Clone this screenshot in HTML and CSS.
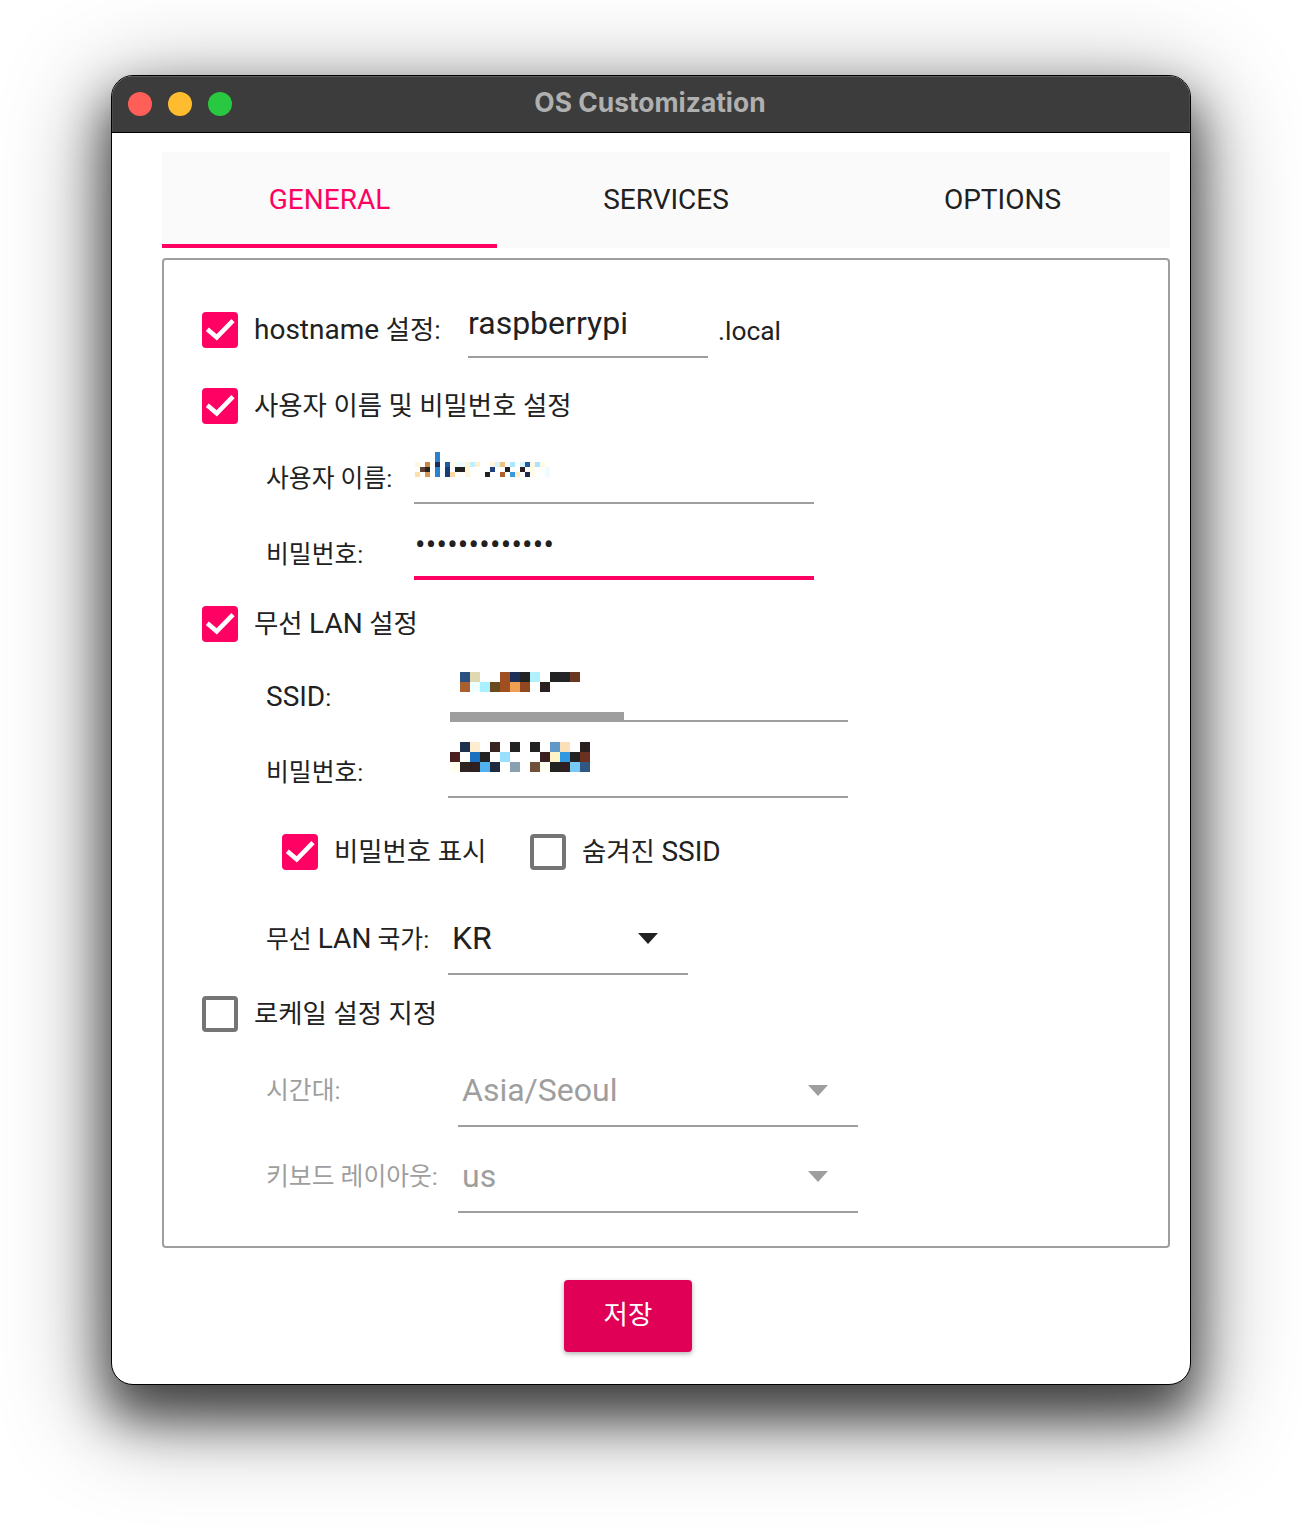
FILE: index.html
```html
<!DOCTYPE html>
<html lang="ko">
<head>
<meta charset="utf-8">
<title>OS Customization</title>
<link rel="stylesheet" href="styles.css">
</head>
<body>
<main class="window">
  <header class="titlebar">
    <div class="lights"><span class="light red"></span><span class="light yellow"></span><span class="light green"></span></div>
    <h1 class="title">OS Customization</h1>
  </header>
  <div class="content">
    <nav class="tabs">
      <div class="tab active">GENERAL</div>
      <div class="tab">SERVICES</div>
      <div class="tab">OPTIONS</div>
    </nav>
    <section class="frame">
      <div class="row row-host">
        <span class="box checked"><svg viewBox="0 0 36 36"><path d="M5.3 17.3 14.7 25.3 31 8.7"/></svg></span>
        <span class="label label-host"><span class="latin">hostname</span> 설정:</span>
        <div class="field field-host"><span class="value">raspberrypi</span></div>
        <span class="label suffix">.local</span>
      </div>
      <div class="row row-check gap-30">
        <span class="box checked"><svg viewBox="0 0 36 36"><path d="M5.3 17.3 14.7 25.3 31 8.7"/></svg></span>
        <span class="label">사용자 이름 및 비밀번호 설정</span>
      </div>
      <div class="row sub gap-24">
        <span class="label w-148">사용자 이름:</span>
        <div class="field field-400">
          <svg class="mosaic m-user" viewBox="0 0 135 25" width="135" height="25" shape-rendering="crispEdges">
            <rect x="20" y="0" width="5" height="10" fill="#2a82cc"/>
            <rect x="0" y="10" width="5" height="5" fill="#fff8e0"/><rect x="10" y="10" width="5" height="5" fill="#c98540"/><rect x="20" y="10" width="5" height="5" fill="#1e2a50"/><rect x="30" y="10" width="5" height="5" fill="#1f5aa0"/><rect x="35" y="10" width="5" height="5" fill="#fffbe8"/><rect x="40" y="10" width="10" height="5" fill="#eefcff"/><rect x="50" y="10" width="5" height="5" fill="#fff6d8"/><rect x="55" y="10" width="5" height="5" fill="#c2efff"/><rect x="60" y="10" width="5" height="5" fill="#fff0d0"/><rect x="75" y="10" width="5" height="5" fill="#fff5dc"/><rect x="80" y="10" width="5" height="5" fill="#d5f5ff"/><rect x="85" y="10" width="5" height="5" fill="#f0c080"/><rect x="95" y="10" width="5" height="5" fill="#a8e8ff"/><rect x="105" y="10" width="5" height="5" fill="#d5f5ff"/><rect x="110" y="10" width="5" height="5" fill="#1e5aa0"/><rect x="115" y="10" width="5" height="5" fill="#fff8e0"/><rect x="120" y="10" width="5" height="5" fill="#a8e4ff"/><rect x="125" y="10" width="5" height="5" fill="#fffbe0"/>
            <rect x="5" y="15" width="5" height="5" fill="#5f4030"/><rect x="10" y="15" width="5" height="5" fill="#222"/><rect x="20" y="15" width="5" height="5" fill="#2a82cc"/><rect x="30" y="15" width="5" height="5" fill="#1a3a78"/><rect x="40" y="15" width="10" height="5" fill="#222"/><rect x="50" y="15" width="5" height="5" fill="#fff6d8"/><rect x="75" y="15" width="5" height="5" fill="#1e4080"/><rect x="90" y="15" width="5" height="5" fill="#222"/><rect x="105" y="15" width="5" height="5" fill="#2a2020"/><rect x="115" y="15" width="5" height="5" fill="#fffbe8"/><rect x="130" y="15" width="5" height="5" fill="#eefcff"/>
            <rect x="0" y="20" width="5" height="5" fill="#ffe0a8"/><rect x="10" y="20" width="5" height="5" fill="#d89850"/><rect x="20" y="20" width="5" height="5" fill="#2a82cc"/><rect x="30" y="20" width="5" height="5" fill="#1a3a78"/><rect x="35" y="20" width="5" height="5" fill="#ffd9a0"/><rect x="50" y="20" width="5" height="5" fill="#fff6d8"/><rect x="70" y="20" width="5" height="5" fill="#222"/><rect x="85" y="20" width="5" height="5" fill="#b06030"/><rect x="95" y="20" width="5" height="5" fill="#3a98e0"/><rect x="100" y="20" width="5" height="5" fill="#fff0c8"/><rect x="110" y="20" width="5" height="5" fill="#1e2a50"/><rect x="115" y="20" width="5" height="5" fill="#fffbe8"/><rect x="130" y="20" width="5" height="5" fill="#eefcff"/>
          </svg>
        </div>
      </div>
      <div class="row sub gap-20">
        <span class="label w-148">비밀번호:</span>
        <div class="field field-400 focused"><span class="value dots">•••••••••••••</span></div>
      </div>
      <div class="row row-check gap-26">
        <span class="box checked"><svg viewBox="0 0 36 36"><path d="M5.3 17.3 14.7 25.3 31 8.7"/></svg></span>
        <span class="label">무선 <span class="latin">LAN</span> 설정</span>
      </div>
      <div class="row sub gap-24">
        <span class="label w-184"><span class="latin">SSID</span>:</span>
        <div class="field field-ssid">
          <svg class="mosaic m-ssid" viewBox="0 0 120 20" width="120" height="20" shape-rendering="crispEdges">
            <rect x="0" y="0" width="10" height="10" fill="#2a5080"/><rect x="10" y="0" width="10" height="10" fill="#e0d8b0"/><rect x="40" y="0" width="10" height="10" fill="#a05020"/><rect x="50" y="0" width="10" height="10" fill="#1e3058"/><rect x="60" y="0" width="10" height="10" fill="#222"/><rect x="70" y="0" width="10" height="10" fill="#b0f0ff"/><rect x="90" y="0" width="10" height="10" fill="#222"/><rect x="100" y="0" width="10" height="10" fill="#222428"/><rect x="110" y="0" width="10" height="10" fill="#6a3820"/>
            <rect x="0" y="10" width="10" height="10" fill="#a86030"/><rect x="10" y="10" width="10" height="10" fill="#eeffff"/><rect x="20" y="10" width="10" height="10" fill="#a8f0ff"/><rect x="30" y="10" width="10" height="10" fill="#6a4a20"/><rect x="40" y="10" width="10" height="10" fill="#a05020"/><rect x="50" y="10" width="10" height="10" fill="#f0a050"/><rect x="60" y="10" width="10" height="10" fill="#904820"/><rect x="80" y="10" width="10" height="10" fill="#2a2020"/>
          </svg>
          <span class="selection"></span>
        </div>
      </div>
      <div class="row sub gap-20">
        <span class="label w-182">비밀번호:</span>
        <div class="field field-400">
          <svg class="mosaic m-wifi" viewBox="0 0 140 30" width="140" height="30" shape-rendering="crispEdges">
            <rect x="10" y="0" width="10" height="10" fill="#1e3050"/><rect x="20" y="0" width="10" height="10" fill="#feecd0"/><rect x="40" y="0" width="10" height="10" fill="#3a2420"/><rect x="60" y="0" width="10" height="10" fill="#222"/><rect x="80" y="0" width="10" height="10" fill="#222"/><rect x="100" y="0" width="10" height="10" fill="#6098c8"/><rect x="110" y="0" width="10" height="10" fill="#fadfb8"/><rect x="130" y="0" width="10" height="10" fill="#2a2020"/>
            <rect x="0" y="10" width="10" height="10" fill="#4a2020"/><rect x="20" y="10" width="10" height="10" fill="#1a70c0"/><rect x="30" y="10" width="10" height="10" fill="#222"/><rect x="50" y="10" width="10" height="10" fill="#98e0ff"/><rect x="90" y="10" width="10" height="10" fill="#3a2020"/><rect x="100" y="10" width="10" height="10" fill="#fff4c8"/><rect x="110" y="10" width="10" height="10" fill="#3098e0"/><rect x="120" y="10" width="10" height="10" fill="#222"/><rect x="130" y="10" width="10" height="10" fill="#6a3020"/>
            <rect x="0" y="20" width="10" height="10" fill="#fffff0"/><rect x="10" y="20" width="10" height="10" fill="#2e2420"/><rect x="20" y="20" width="10" height="10" fill="#2e2020"/><rect x="30" y="20" width="10" height="10" fill="#50b0f0"/><rect x="40" y="20" width="10" height="10" fill="#1e2a40"/><rect x="60" y="20" width="10" height="10" fill="#88a0b0"/><rect x="80" y="20" width="10" height="10" fill="#705038"/><rect x="90" y="20" width="10" height="10" fill="#fffff0"/><rect x="100" y="20" width="10" height="10" fill="#222"/><rect x="110" y="20" width="10" height="10" fill="#2e2020"/><rect x="120" y="20" width="10" height="10" fill="#78c8f8"/><rect x="130" y="20" width="10" height="10" fill="#305880"/>
          </svg>
        </div>
      </div>
      <div class="row row-check row-options gap-36">
        <div class="option">
          <span class="box checked"><svg viewBox="0 0 36 36"><path d="M5.3 17.3 14.7 25.3 31 8.7"/></svg></span>
          <span class="label">비밀번호 표시</span>
        </div>
        <div class="option">
          <span class="box"></span>
          <span class="label">숨겨진 <span class="latin">SSID</span></span>
        </div>
      </div>
      <div class="row sub gap-49">
        <span class="label w-182 up">무선 <span class="latin">LAN</span> 국가:</span>
        <div class="field combo combo-country">
          <span class="value">KR</span>
          <svg class="caret" viewBox="0 0 20 12"><path d="M0 0H20L10 11Z"/></svg>
        </div>
      </div>
      <div class="row row-check gap-21">
        <span class="box"></span>
        <span class="label">로케일 설정 지정</span>
      </div>
      <div class="row sub disabled gap-39">
        <span class="label w-192 up">시간대:</span>
        <div class="field field-400 combo">
          <span class="value">Asia/Seoul</span>
          <svg class="caret" viewBox="0 0 20 12"><path d="M0 0H20L10 11Z"/></svg>
        </div>
      </div>
      <div class="row sub disabled gap-30">
        <span class="label w-192 up">키보드 레이아웃:</span>
        <div class="field field-400 combo">
          <span class="value">us</span>
          <svg class="caret" viewBox="0 0 20 12"><path d="M0 0H20L10 11Z"/></svg>
        </div>
      </div>
    </section>
    <div class="actions"><button class="save" type="button">저장</button></div>
  </div>
</main>
</body>
</html>
```

FILE: styles.css
```css
* { box-sizing: border-box; }
html, body { margin: 0; padding: 0; background: #fff; }
body {
  padding: 75px 111px 147px;
  font-family: Roboto, "Noto Sans CJK KR", sans-serif;
  color: #212121;
}
.window {
  width: 1080px;
  height: 1310px;
  border: 1px solid #000;
  border-radius: 22px;
  background: #fff;
  overflow: hidden;
  box-shadow: 0 28px 50px 4px rgba(0, 0, 0, .62), 0 24px 100px 8px rgba(0, 0, 0, .42);
}
.titlebar {
  height: 57px;
  background: #3b3c3b;
  border-bottom: 1px solid #000;
  box-shadow: inset 0 1px 0 #5c5c5c, inset 1px 0 0 #4c4c4c, inset -1px 0 0 #4c4c4c;
  display: flex;
  align-items: center;
  position: relative;
}
.lights { display: flex; gap: 16px; padding-left: 16px; }
.light { width: 24px; height: 24px; border-radius: 50%; }
.red { background: #ff5f57; }
.yellow { background: #febc2e; }
.green { background: #28c840; }
.title {
  margin: 0 0 4px;
  position: absolute;
  left: 0;
  right: 2px;
  text-align: center;
  font: 700 26.4px/1 Inter, sans-serif;
  color: #b0b0b0;
}
.content { padding: 19px 20px 0 50px; }
.tabs {
  display: grid;
  grid-template-columns: 335px 338px 335px;
  height: 96px;
  background: #fafafa;
}
.tab {
  display: flex;
  align-items: center;
  justify-content: center;
  font-size: 28px;
  padding-bottom: 2px;
}
.tab.active { color: #ff0063; border-bottom: 4px solid #ff0063; padding: 2px 0 0; }
.frame {
  margin-top: 10px;
  height: 990px;
  border: 2px solid #9e9e9e;
  border-radius: 4px;
  padding: 42px 0 0 38px;
}
.row { display: flex; align-items: center; }
.row-host { height: 56px; }
.row-check { height: 36px; }
.sub { height: 56px; padding-left: 64px; }
.gap-20 { margin-top: 20px; }
.gap-21 { margin-top: 21px; }
.gap-24 { margin-top: 24px; }
.gap-26 { margin-top: 26px; }
.gap-30 { margin-top: 30px; }
.gap-36 { margin-top: 36px; }
.gap-39 { margin-top: 39px; }
.gap-49 { margin-top: 49px; }
.box {
  flex: none;
  width: 36px;
  height: 36px;
  margin-right: 16px;
  border: 4px solid #757575;
  border-radius: 4px;
}
.box.checked { border: 0; background: #ff0063; }
.box svg { display: block; width: 36px; height: 36px; }
.box path { fill: none; stroke: #fff; stroke-width: 4.6; }
.label { font-size: 26.4px; line-height: 36px; white-space: nowrap; }
.latin { font-size: 28px; }
.sub .label { font-size: 24.8px; margin-top: 6px; }
.sub .label .latin { font-size: 28px; }
.label-host { width: 214px; }
.suffix { margin: 1px 0 0 10px; }
.w-148 { width: 148px; }
.w-182 { width: 182px; }
.w-184 { width: 184px; }
.w-192 { width: 192px; }
.sub .up { margin: 0 0 16px; }
.field {
  height: 56px;
  border-bottom: 2px solid #9e9e9e;
  display: flex;
  flex-direction: column;
  align-items: flex-start;
}
.field-host { width: 240px; }
.field-400 { width: 400px; }
.field-ssid { width: 398px; }
.focused { border-bottom: 4px solid #ff0063; }
.value { font-size: 32px; line-height: 42px; }
.dots { font-size: 31px; letter-spacing: .25px; padding-left: 1px; }
.mosaic { display: block; flex: none; }
.m-user { margin: 4px 0 0 1px; }
.m-ssid { margin: 6px 0 0 10px; }
.m-wifi { margin: 0 0 0 2px; }
.selection { margin-top: auto; width: 174px; height: 8px; background: #9e9e9e; }
.row-options { padding-left: 80px; }
.option { display: flex; align-items: center; width: 248px; }
.combo { flex-direction: row; justify-content: space-between; padding: 0 30px 0 4px; }
.combo-country { width: 240px; }
.combo .value { line-height: 38px; }
.caret { width: 20px; height: 12px; margin-top: 14px; flex: none; }
.caret path { fill: #212121; }
.disabled { color: #9e9e9e; }
.disabled .caret path { fill: #9e9e9e; }
.actions { margin-top: 32px; padding-left: 402px; }
.save {
  display: block;
  width: 128px;
  height: 72px;
  padding: 0 0 7px;
  border: 0;
  border-radius: 4px;
  background: #e00055;
  color: #fff;
  font: 26.5px Roboto, "Noto Sans CJK KR", sans-serif;
  box-shadow: 0 2px 5px rgba(0, 0, 0, .3);
}
```
